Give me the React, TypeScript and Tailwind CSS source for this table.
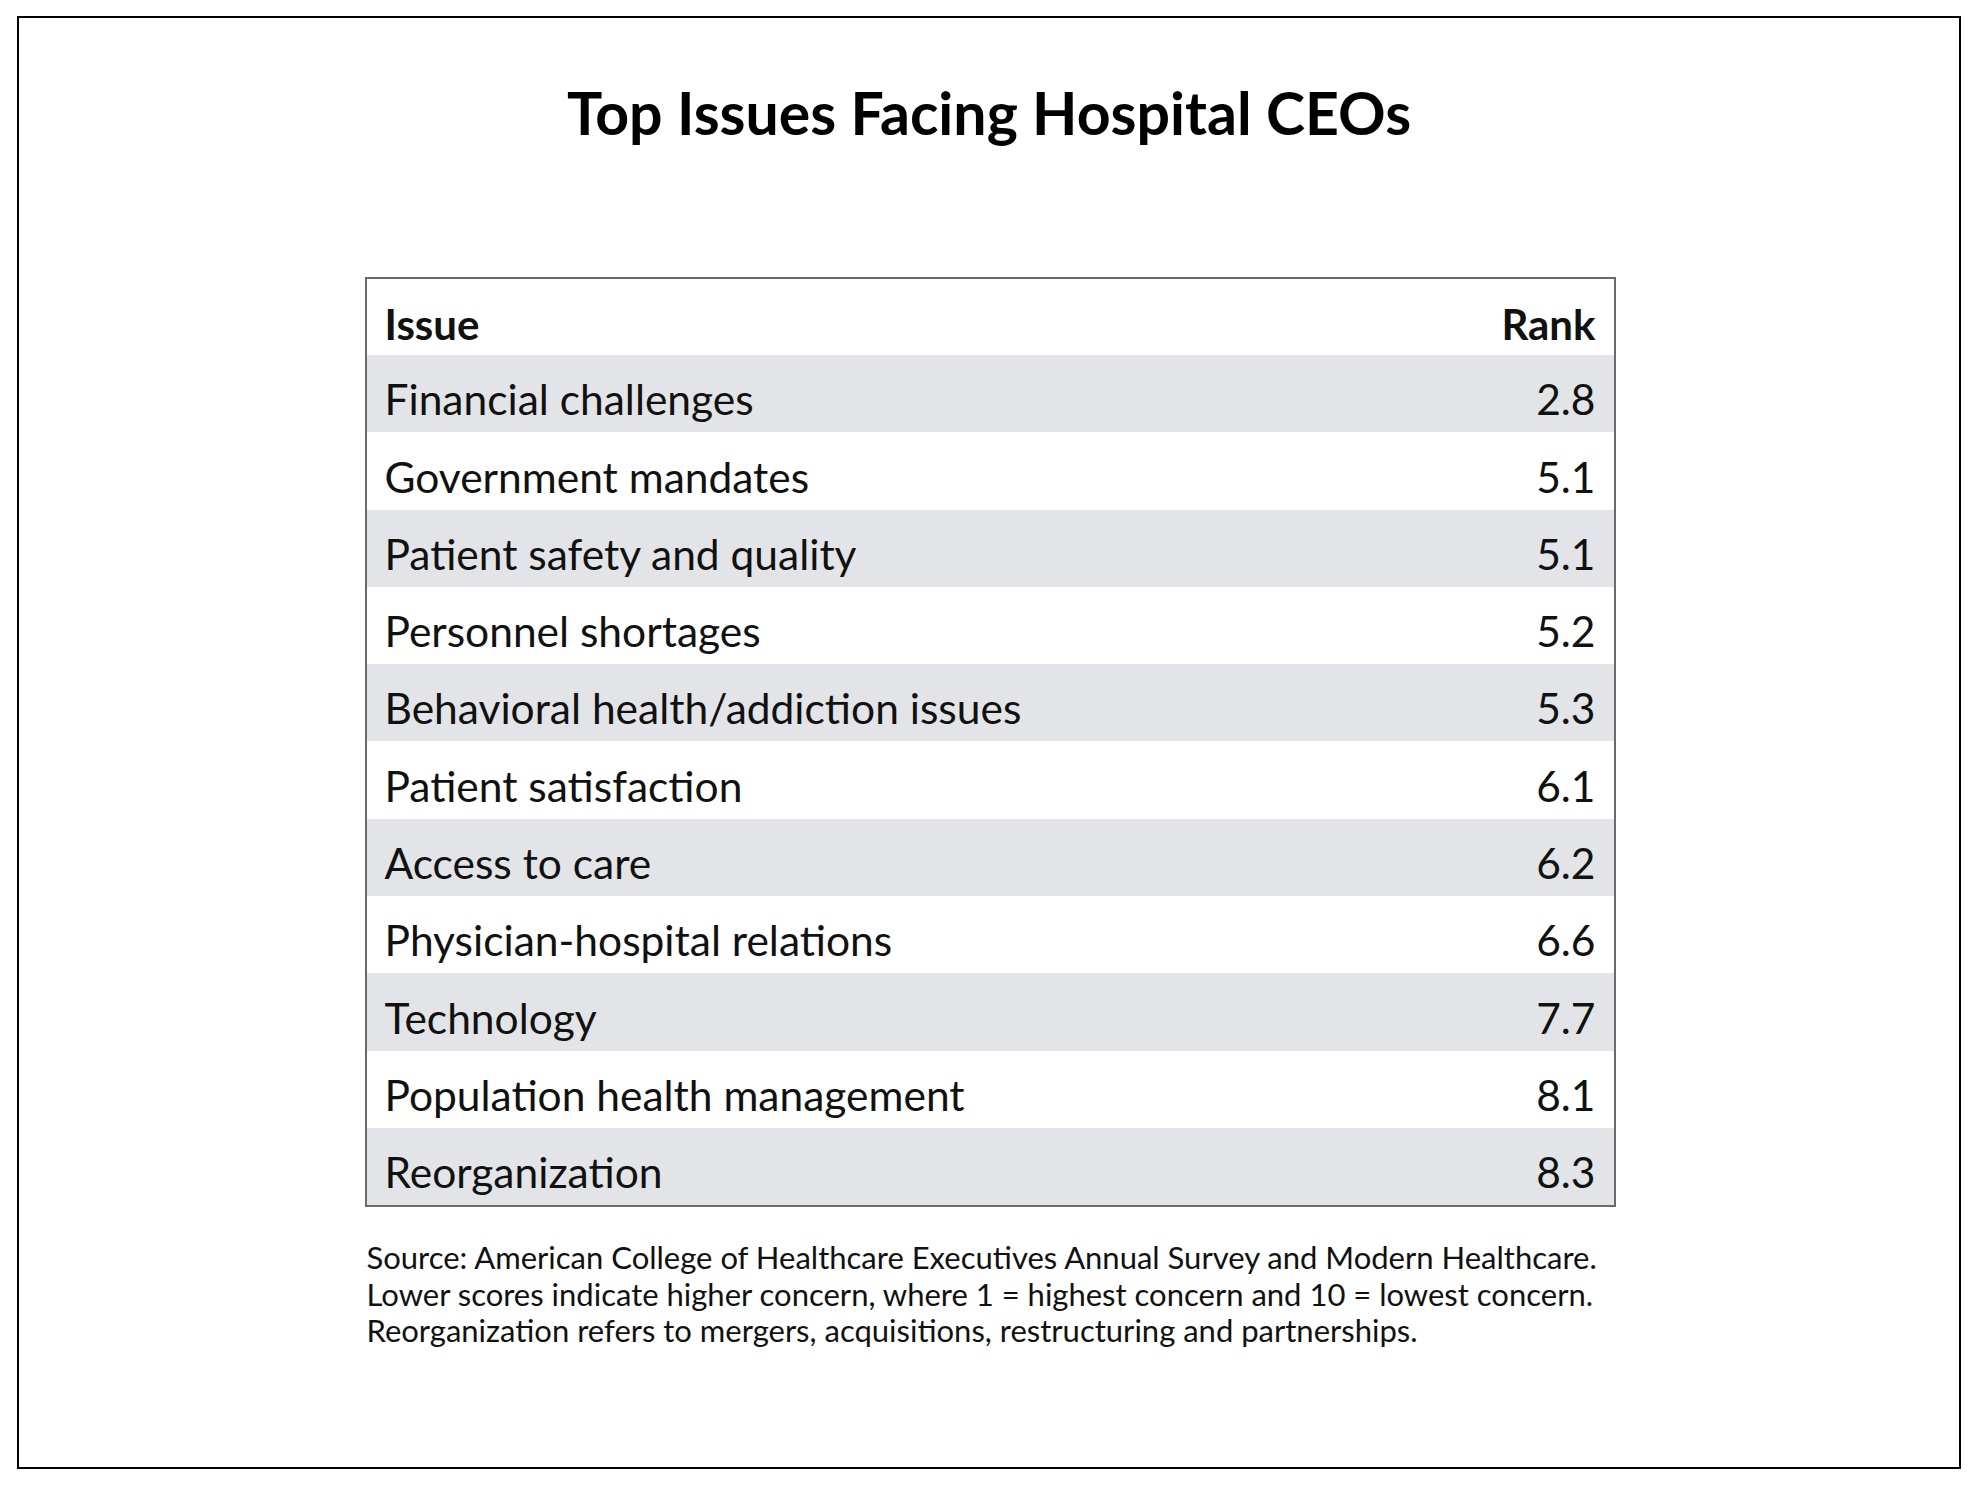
import React from "react";

const rows: [string, string][] = [
  ["Financial challenges", "2.8"],
  ["Government mandates", "5.1"],
  ["Patient safety and quality", "5.1"],
  ["Personnel shortages", "5.2"],
  ["Behavioral health/addiction issues", "5.3"],
  ["Patient satisfaction", "6.1"],
  ["Access to care", "6.2"],
  ["Physician-hospital relations", "6.6"],
  ["Technology", "7.7"],
  ["Population health management", "8.1"],
  ["Reorganization", "8.3"],
];

const App = (): JSX.Element => {
  return (
    <div className="w-[1980px] h-[1485px] bg-white pt-[16px] pl-[17px] font-['Lato','Liberation_Sans',sans-serif] text-[#111]">
      <div className="w-[1944px] h-[1453px] border-2 border-black flex flex-col items-center">
        <h1 className="mt-[65px] text-[59px] leading-none font-bold text-black">
          Top Issues Facing Hospital CEOs
        </h1>

        <div className="mt-[135px] w-[1251px] ml-[2px]">
          <div className="border-2 border-[#6a6a6a]">
            <div className="h-[76px] pt-[14px] px-[18px] flex items-center justify-between text-[42px] font-bold bg-white">
              <span>Issue</span>
              <span>Rank</span>
            </div>
            {rows.map(([issue, rank], i) => (
              <div
                key={issue}
                className={
                  i % 2 === 0
                    ? "h-[77.3px] pt-[11px] px-[18px] flex items-center justify-between text-[42.5px] bg-[#e2e4e7]"
                    : "h-[77.3px] pt-[11px] px-[18px] flex items-center justify-between text-[42.5px] bg-white"
                }
              >
                <span>{issue}</span>
                <span>{rank}</span>
              </div>
            ))}
          </div>

          <div className="mt-[32px] pl-[2px] text-[31px] leading-[36.5px]">
            <p>
              Source: American College of Healthcare Executives Annual Survey and Modern Healthcare.
            </p>
            <p>
              Lower scores indicate higher concern, where 1 = highest concern and 10 = lowest concern.
            </p>
            <p>
              Reorganization refers to mergers, acquisitions, restructuring and partnerships.
            </p>
          </div>
        </div>
      </div>
    </div>
  );
};

export default App;
